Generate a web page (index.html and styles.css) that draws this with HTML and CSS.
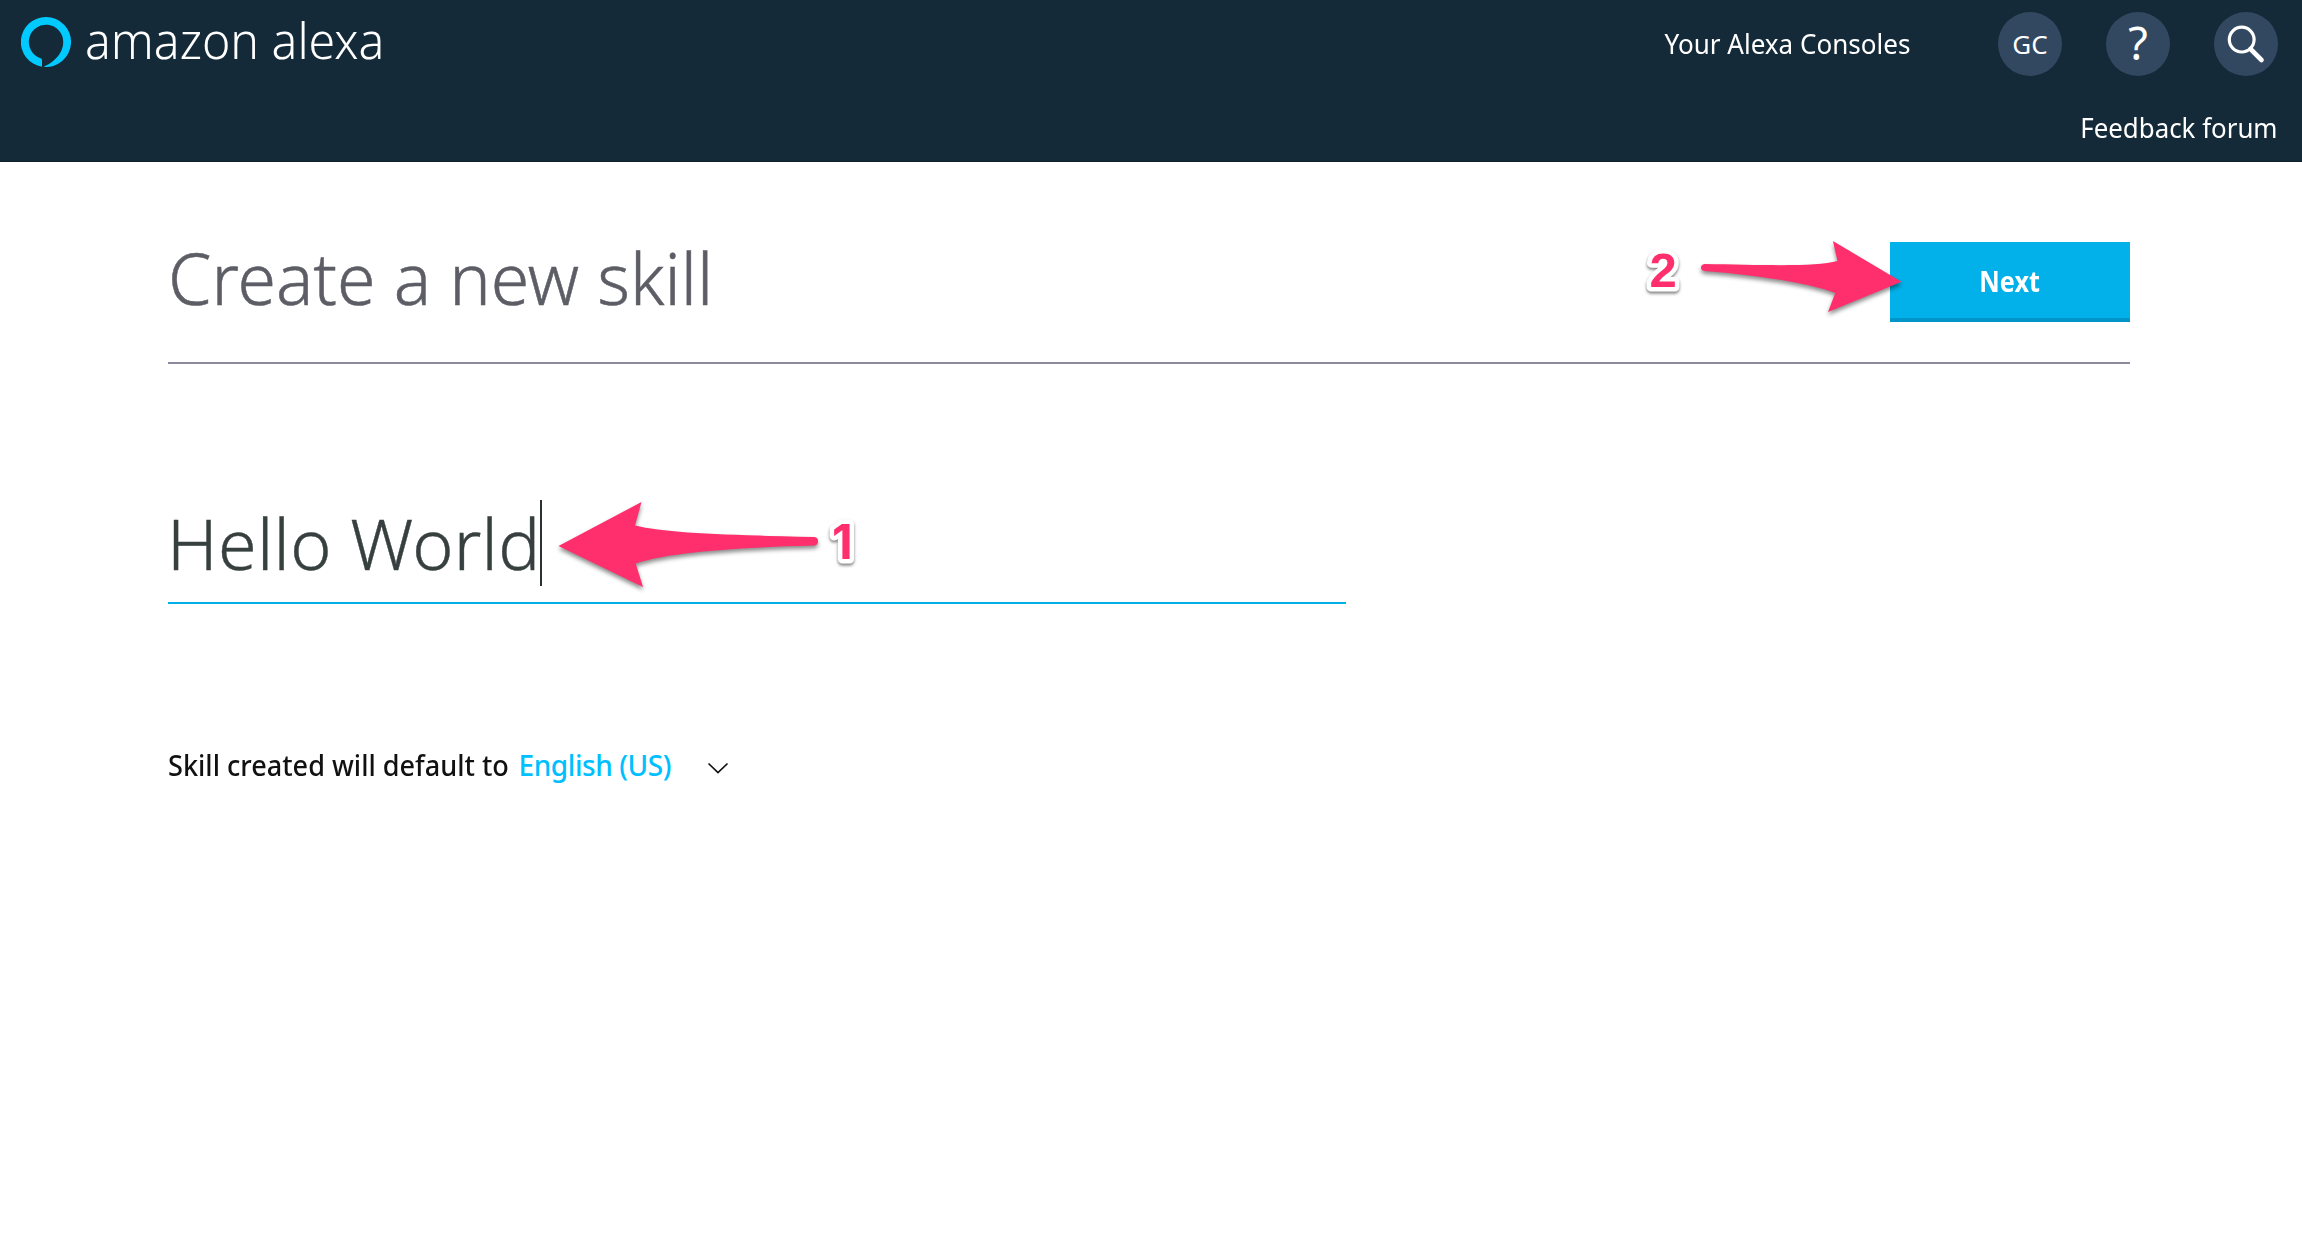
FILE: index.html
```html
<!DOCTYPE html>
<html lang="en">
<head>
<meta charset="utf-8">
<title>Create a new skill</title>
<link rel="stylesheet" href="styles.css">
</head>
<body>
<header class="header">
  <div class="header-top">
    <a class="logo">
      <svg class="logo-mark" viewBox="0 0 50 50" width="50" height="50"><path fill="#00caff" d="M25 0A25 25 0 0 0 21 49.7V43.2C21 42.3 20.4 41.6 19.6 41.2A17.2 17.2 0 1 1 42.2 25C42.2 38 30.500 46.500 22.300 49.850A25 25 0 1 0 25 0Z"/></svg>
      <span class="logo-text">amazon alexa</span>
    </a>
    <nav class="tools">
      <a class="consoles">Your Alexa Consoles</a>
      <span class="round initials">GC</span>
      <span class="round help">?</span>
      <span class="round">
        <svg viewBox="0 0 64 64" width="64" height="64" fill="none" stroke="#fff"><circle cx="27.700" cy="27.600" r="12.400" stroke-width="3.200"/><path d="M36.500 37L47.500 48" stroke-width="4.600" stroke-linecap="round"/></svg>
      </span>
    </nav>
  </div>
  <a class="feedback">Feedback forum</a>
</header>
<main class="page">
  <div class="title-bar">
    <h1 class="title">Create a new skill</h1>
    <button class="next"><span class="next-label">Next</span></button>
  </div>
  <div class="name-field"><span class="name-value">Hello World</span><span class="caret"></span></div>
  <div class="locale">
    <span class="locale-label">Skill created will default to</span>
    <span class="locale-value">English (US)</span>
    <svg class="chevron" viewBox="0 0 22 12" width="22" height="12"><path d="M1.500 1.500L11 10.500L20.500 1.500" fill="none" stroke="#111" stroke-width="1.700"/></svg>
  </div>
</main>
<svg class="notes" viewBox="0 0 2302 1256" width="2302" height="1256">
  <g class="arrow">
    <path d="M1901.500 281.700L1832.900 241L1837.500 261C1816 267 1765 265 1704.500 264Q1701 264.500 1701 267.500Q1701 270.500 1704.500 271C1765 276 1812 284 1835.300 293L1828 312Z"/>
    <path d="M558.500 546L641.500 502L635 525.500C665 533 725 535 814.500 537Q818 537.500 818 541.300Q818 545 814.500 545.500C752 547 672 551 635.700 563.500L643 587Z"/>
  </g>
  <text class="num two" x="1649.500" y="287.300">2</text>
  <text class="num one" x="832" y="558.500">1</text>
</svg>
</body>
</html>
```
FILE: styles.css
```css
* { box-sizing: border-box; }
body {
  margin: 0;
  min-height: 1256px;
  background: #fff;
  font-family: "Noto Sans", "Open Sans", sans-serif;
  position: relative;
  overflow-x: hidden;
}
.header {
  height: 162px;
  padding: 12px 24px 0 21px;
  background: #152a38;
  border-bottom: 1px solid #10202d;
  color: #fff;
  display: flex;
  flex-direction: column;
}
.header-top {
  display: flex;
  justify-content: space-between;
  height: 64px;
}
.logo { display: flex; align-items: flex-start; }
.logo-mark { margin-top: 5px; }
.logo-text {
  margin: -2px 0 0 13.500px;
  font-size: 50px;
  font-weight: 300;
  line-height: 60px;
  transform: scaleX(.963);
  transform-origin: left;
}
.tools { display: flex; align-items: center; gap: 44px; }
.consoles {
  font-size: 28px;
  line-height: 40px;
  margin: -2px 44px 0 0;
  transform: scaleX(.93);
  transform-origin: right;
}
.round {
  width: 64px;
  height: 64px;
  border-radius: 50%;
  background: #324860;
  display: flex;
  align-items: center;
  justify-content: center;
}
.initials { font-size: 26px; line-height: 62px; }
.help { font-size: 45px; line-height: 62px; align-items: flex-start; }
.feedback {
  align-self: flex-end;
  margin-top: 31px;
  font-size: 28px;
  line-height: 40px;
  transform: scaleX(.924);
  transform-origin: right;
}
.page { padding: 80px 172px 0 168px; }
.title-bar {
  display: flex;
  justify-content: space-between;
  align-items: flex-start;
  height: 122px;
  border-bottom: 2px solid #8a899d;
}
.title {
  margin: -4px 0 0;
  font-size: 71px;
  font-weight: 300;
  line-height: 80px;
  color: #5d5d66;
  -webkit-text-stroke: .5px #5d5d66;
  transform: scaleX(.982);
  transform-origin: left;
}
.next {
  width: 240px;
  height: 80px;
  padding: 2px 0 0;
  border: 0;
  border-bottom: 4px solid #0095c8;
  background: #02b1e9;
  color: #fff;
  font: 700 28px/74px "Noto Sans", sans-serif;
}
.next-label { display: inline-block; transform: scaleX(.9); }
.name-field {
  display: flex;
  width: 1178px;
  height: 104px;
  margin-top: 136px;
  border-bottom: 2px solid #00b0e8;
}
.name-value {
  width: 372px;
  font-size: 70px;
  font-weight: 300;
  line-height: 87px;
  color: #373f3f;
  -webkit-text-stroke: .4px #373f3f;
  white-space: nowrap;
  margin-left: -1px;
  margin-right: 1px;
  letter-spacing: .3px;
}
.caret { width: 2px; height: 86px; background: #29322f; }
.locale {
  display: flex;
  align-items: center;
  margin-top: 141px;
  font-size: 28px;
  font-weight: 500;
  line-height: 40px;
  color: #111;
}
.locale-label { width: 350.500px; white-space: nowrap; transform: scaleX(.967); transform-origin: left; }
.locale-value { width: 188px; color: #00bfff; letter-spacing: -.42px; }
.chevron { margin-top: 6px; }
.notes { position: absolute; left: 0; top: 0; }
.arrow { fill: #ff2e6c; filter: drop-shadow(0 3px 2px rgba(0, 0, 0, .45)); }
.num {
  font-weight: 700;
  fill: #ff2e6c;
  stroke: #fff;
  stroke-width: 9px;
  stroke-linejoin: round;
  paint-order: stroke;
  filter: drop-shadow(0 2px 1.500px rgba(0, 0, 0, .5));
}
.two { font-family: "Liberation Sans", sans-serif; font-size: 49px; }
.one { font-family: Inter, sans-serif; font-size: 48px; }
```
